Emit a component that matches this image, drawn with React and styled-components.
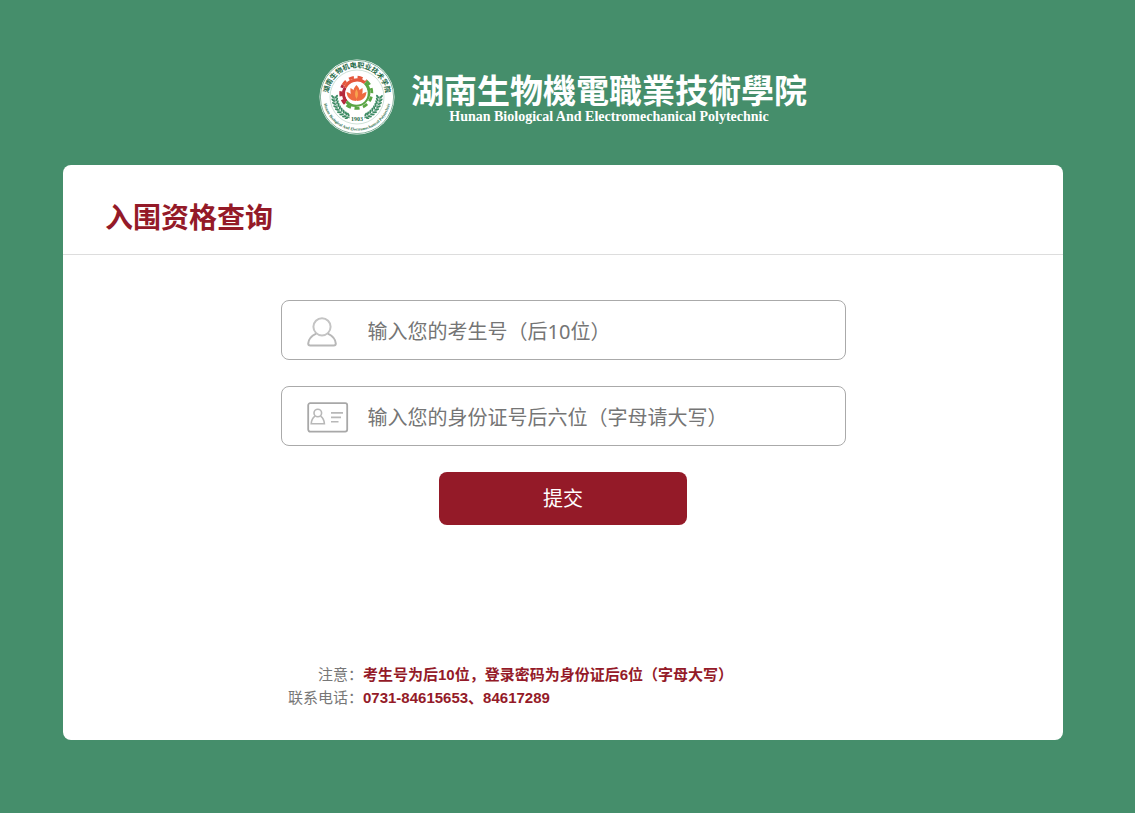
import React, { useState } from "react";
import styled, { createGlobalStyle } from "styled-components";

const LEAVES = [178, 170, 162, 154, 146, 138, 130, 122, 115];

const leafAt = (deg, r) => {
  const a = (deg * Math.PI) / 180;
  return [38 + r * Math.cos(a), 37 + r * Math.sin(a)];
};

const Sprig = () => (
  <g fill="#3c8a63">
    <path
      d="M15 37 A23 23 0 0 0 31 59"
      fill="none"
      stroke="#2f7d57"
      strokeWidth="0.6"
    />
    {LEAVES.map((deg) => {
      const [ox, oy] = leafAt(deg, 24.2);
      const [ix, iy] = leafAt(deg, 20.6);
      return (
        <g key={deg}>
          <ellipse
            cx={ox}
            cy={oy}
            rx="2.2"
            ry="1"
            transform={`rotate(${deg + 50} ${ox} ${oy})`}
          />
          <ellipse
            cx={ix}
            cy={iy}
            rx="2.2"
            ry="1"
            transform={`rotate(${deg + 130} ${ix} ${iy})`}
          />
        </g>
      );
    })}
  </g>
);

const Seal = () => (
  <SealSvg viewBox="0 0 76 76" role="img" aria-label="湖南生物机电职业技术学院">
    <defs>
      <path id="seal-top" d="M10.2 45 A28.8 28.8 0 1 1 65.8 45" />
      <path id="seal-bottom" d="M4.4 38 A33.6 33.6 0 0 0 71.6 38" />
    </defs>
    <circle cx="38" cy="38" r="37.5" fill="#fff" />
    <circle
      cx="38"
      cy="38"
      r="36.6"
      fill="none"
      stroke="#2f7d57"
      strokeWidth="0.6"
    />
    <circle
      cx="38"
      cy="38"
      r="27"
      fill="none"
      stroke="#9cc2ae"
      strokeWidth="0.5"
    />
    <SealName>
      <textPath href="#seal-top" startOffset="50%" textAnchor="middle">
        湖南生物机电职业技术学院
      </textPath>
    </SealName>
    <SealEnglish>
      <textPath href="#seal-bottom" startOffset="50%" textAnchor="middle">
        Hunan Biological And Electromechanical Polytechnic
      </textPath>
    </SealEnglish>
    <Sprig />
    <g transform="translate(76 0) scale(-1 1)">
      <Sprig />
    </g>
    <g fill="none" strokeWidth="3.2">
      <path d="M27.4 42.5 A13 13 0 0 1 26.2 28.5" stroke="#b5293c" />
      <path d="M26.2 28.5 A13 13 0 0 1 46 23.8" stroke="#e4573d" />
      <path d="M46 23.8 A13 13 0 0 1 27.4 42.5" stroke="#5aa544" />
    </g>
    <g fill="none" strokeWidth="2.8" strokeDasharray="5 3.6">
      <path d="M26 44.8 A15.4 15.4 0 0 1 24 26" stroke="#b5293c" />
      <path d="M24 26 A15.4 15.4 0 0 1 47.5 22" stroke="#e4573d" />
      <path d="M47.5 22 A15.4 15.4 0 0 1 27 45.6" stroke="#5aa544" />
    </g>
    <circle cx="37.5" cy="34.5" r="11.2" fill="#fff" />
    <g fill="#ee6a3f">
      <path d="M37.5 26 C42 30 42 37 37.5 41 C33 37 33 30 37.5 26Z" />
      <path d="M31.5 29 C31 34 32 39 37 41.5 C41 37 36 31 31.5 29Z" />
      <path d="M43.5 29 C44 34 43 39 38 41.5 C34 37 39 31 43.5 29Z" />
      <path d="M27.5 33 C28 39 32 42 37.5 42 C36 37 32 34 27.5 33Z" />
      <path d="M47.5 33 C47 39 43 42 37.5 42 C39 37 43 34 47.5 33Z" />
    </g>
    <path
      d="M37.5 30 C39.5 33 39.5 37 37.5 40 C35.5 37 35.5 33 37.5 30Z"
      fill="#f8a24e"
    />
    <SealYear x="38" y="62" textAnchor="middle">
      1903
    </SealYear>
  </SealSvg>
);

const UserIcon = () => (
  <svg width="30" height="30" viewBox="0 0 30 30" aria-hidden="true">
    <g fill="none" stroke="#c4c4c4" strokeWidth="2">
      <circle cx="15" cy="9.8" r="8.6" />
      <path
        d="M9.2 16.6 C4.2 19 1.4 22.6 1.2 26.6 Q1.2 28.6 3.2 28.6 H26.8 Q28.8 28.6 28.8 26.6 C28.6 22.6 25.8 19 20.8 16.6"
        stroke="#b8b8b8"
      />
    </g>
  </svg>
);

const CardIcon = () => (
  <svg width="42" height="31" viewBox="0 0 42 31" aria-hidden="true">
    <rect
      x="1.2"
      y="1.2"
      width="39"
      height="28.4"
      rx="2"
      fill="none"
      stroke="#a8a8a8"
      strokeWidth="1.8"
    />
    <g fill="none" stroke="#b8b8b8" strokeWidth="1.6">
      <circle cx="10.8" cy="11" r="3.8" />
      <path d="M8 14.2 C5.6 16 4.4 18.2 4.2 21.8 H17.4 C17.2 18.2 16 16 13.6 14.2" />
      <path d="M24 10.9 H36 M24 15.4 H34 M24 19.8 H31.5" />
    </g>
  </svg>
);

const Field = ({ icon, label, value, onChange }) => (
  <FieldBox>
    <FieldIcon>{icon}</FieldIcon>
    <FieldInput
      type="text"
      aria-label={label}
      placeholder={label}
      value={value}
      onChange={(e) => onChange(e.target.value)}
    />
  </FieldBox>
);

const App = () => {
  const [examNo, setExamNo] = useState("");
  const [idNo, setIdNo] = useState("");

  return (
    <Page>
      <GlobalStyle />
      <Header>
        <Seal />
        <SchoolName>
          <SchoolTitle>湖南生物機電職業技術學院</SchoolTitle>
          <SchoolEnglish>
            Hunan Biological And Electromechanical Polytechnic
          </SchoolEnglish>
        </SchoolName>
      </Header>

      <Card>
        <CardTitle>入围资格查询</CardTitle>
        <Form onSubmit={(e) => e.preventDefault()}>
          <Field
            icon={<UserIcon />}
            label="输入您的考生号（后10位）"
            value={examNo}
            onChange={setExamNo}
          />
          <Field
            icon={<CardIcon />}
            label="输入您的身份证号后六位（字母请大写）"
            value={idNo}
            onChange={setIdNo}
          />
          <SubmitButton type="submit">提交</SubmitButton>
        </Form>
        <Notes>
          <dt>注意：</dt>
          <dd>考生号为后10位，登录密码为身份证后6位（字母大写）</dd>
          <dt>联系电话：</dt>
          <dd>0731-84615653、84617289</dd>
        </Notes>
      </Card>
    </Page>
  );
};

const GlobalStyle = createGlobalStyle`
  * {
    box-sizing: border-box;
  }
  body {
    margin: 0;
    background: #458e6b;
    font-family: "Noto Sans", "Noto Sans CJK SC", sans-serif;
  }
`;

const Page = styled.div`
  min-height: 100vh;
  padding: 59px 72px 73px 63px;
  background: #458e6b;
`;

const Header = styled.header`
  display: flex;
  justify-content: center;
  gap: 16px;
  margin-bottom: 30px;
`;

const SealSvg = styled.svg`
  width: 76px;
  height: 76px;
  flex: none;
`;

const SealName = styled.text`
  font: bold 7px "Noto Sans CJK SC", sans-serif;
  fill: #1f6b48;
`;

const SealEnglish = styled.text`
  font: bold 4px "Liberation Serif", serif;
  fill: #1f6b48;
`;

const SealYear = styled.text`
  font: bold 6px "Liberation Serif", serif;
  fill: #1f6b48;
`;

const SchoolName = styled.div`
  display: flex;
  flex-direction: column;
  align-items: center;
  padding-top: 10px;
  color: #fff;
`;

const SchoolTitle = styled.div`
  font: bold 33px/40px "Noto Sans CJK TC", sans-serif;
  white-space: nowrap;
`;

const SchoolEnglish = styled.div`
  font: bold 14px/16px "Liberation Serif", serif;
  white-space: nowrap;
`;

const Card = styled.main`
  max-width: 1000px;
  margin: 0 auto;
  background: #fff;
  border-radius: 8px;
`;

const CardTitle = styled.h1`
  margin: 0;
  padding: 32px 42px 17px;
  border-bottom: 1px solid #ddd;
  color: #941a28;
  font-size: 28px;
  line-height: 40px;
`;

const Form = styled.form`
  display: flex;
  flex-direction: column;
  align-items: center;
  gap: 26px;
  padding: 45px 20px 0;
`;

const FieldBox = styled.div`
  display: flex;
  align-items: center;
  width: 100%;
  max-width: 565px;
  height: 60px;
  padding: 3px 25px 0;
  border: 1px solid #aaa;
  border-radius: 8px;
`;

const FieldIcon = styled.span`
  display: flex;
  width: 61px;
  flex: none;
`;

const FieldInput = styled.input`
  flex: 1;
  min-width: 0;
  height: 40px;
  padding: 0;
  border: 0;
  outline: 0;
  background: none;
  color: #333;
  font-family: inherit;
  font-size: 20px;

  &::placeholder {
    color: #757575;
  }
`;

const SubmitButton = styled.button`
  width: 248px;
  height: 53px;
  padding: 0 0 2px;
  border: 0;
  border-radius: 8px;
  background: #941a28;
  color: #fff;
  font-family: inherit;
  font-size: 20px;
  cursor: pointer;
`;

const Notes = styled.dl`
  display: grid;
  grid-template-columns: 75px 1fr;
  max-width: 550px;
  margin: 0 auto;
  padding: 138px 0 31px;
  font: 15px/23px "Liberation Sans", "Noto Sans CJK SC", sans-serif;

  dt {
    color: #777;
    text-align: right;
  }
  dd {
    margin: 0;
    color: #941a28;
    font-weight: bold;
  }
`;

export default App;
